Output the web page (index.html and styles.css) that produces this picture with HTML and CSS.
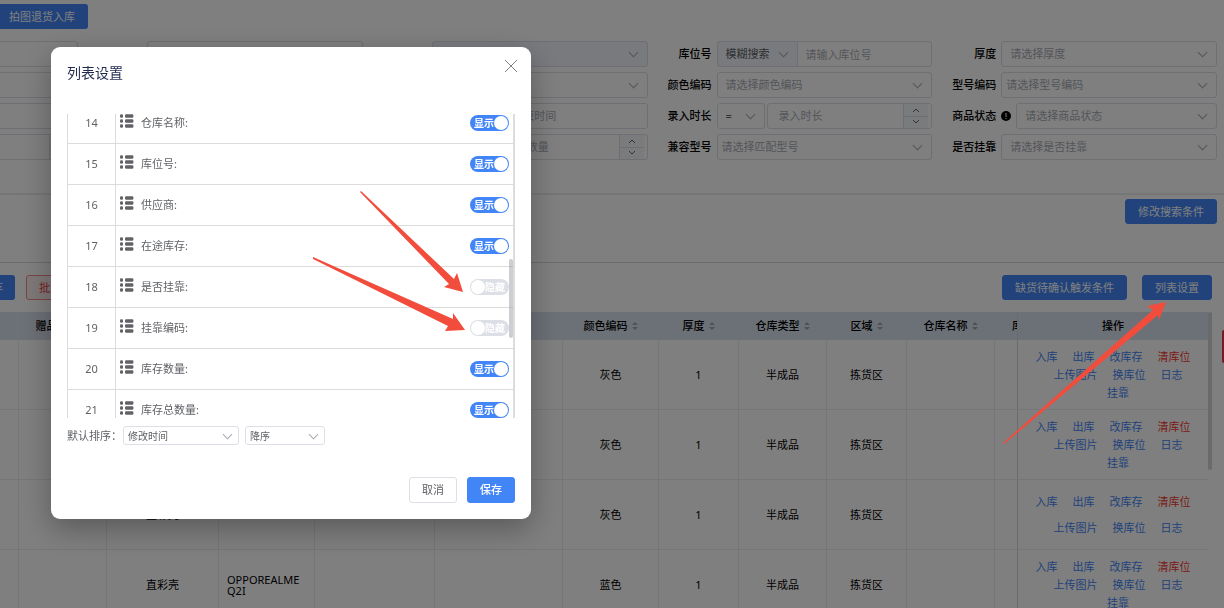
FILE: index.html
```html
<!DOCTYPE html>
<html lang="zh-CN">
<head>
    <meta charset="UTF-8">
    <title>库存列表</title>
    <link rel="stylesheet" href="styles.css">
</head>
<body>
<svg class="defs" aria-hidden="true">
    <symbol id="icon-list" viewBox="0 0 14 18">
        <rect x="0" y=".3" width="3" height="3.4" rx="1.2"/><rect x="5" y=".3" width="8.4" height="3.4" rx="1.2"/>
        <rect x="0" y="5.3" width="3" height="3.4" rx="1.2"/><rect x="5" y="5.3" width="8.4" height="3.4" rx="1.2"/>
        <rect x="0" y="10.3" width="3" height="3.4" rx="1.2"/><rect x="5" y="10.3" width="8.4" height="3.4" rx="1.2"/>
    </symbol>
    <symbol id="icon-sort" viewBox="0 0 6 10">
        <path d="M0 4L3 1L6 4zM0 6L3 9L6 6z"/>
    </symbol>
    <symbol id="icon-up" viewBox="0 0 8 6">
        <path d="M1 5L4 2L7 5" fill="none" stroke="currentColor"/>
    </symbol>
    <symbol id="icon-down" viewBox="0 0 8 6">
        <path d="M1 1L4 4L7 1" fill="none" stroke="currentColor"/>
    </symbol>
</svg>
<div class="page">
    <!-- 搜索条件 -->
    <div class="search">
        <button class="btn primary cut">拍图退货入库</button>
        <div class="filters">
            <div class="item"><input class="box cut" type="text" aria-label="编码"></div>
            <div class="item"><label for="f12"></label><input class="box" id="f12" type="text"></div>
            <div class="item">
                <label for="f13"></label>
                <div class="select gray"><select id="f13"><option></option></select></div>
            </div>
            <div class="item">
                <label for="f14">库位号</label>
                <div class="select gray mode"><select aria-label="搜索方式"><option>模糊搜索</option></select></div>
                <input class="box joined" id="f14" type="text" placeholder="请输入库位号">
            </div>
            <div class="item">
                <label for="f15">厚度</label>
                <div class="select"><select id="f15"><option>请选择厚度</option></select></div>
            </div>

            <div class="item"><input class="box cut" type="text" aria-label="名称"></div>
            <div class="item"><label for="f22"></label><input class="box" id="f22" type="text"></div>
            <div class="item">
                <label for="f23"></label>
                <div class="select"><select id="f23"><option></option></select></div>
            </div>
            <div class="item">
                <label for="f24">颜色编码</label>
                <div class="select"><select id="f24"><option>请选择颜色编码</option></select></div>
            </div>
            <div class="item">
                <label for="f25">型号编码</label>
                <div class="select tight"><select id="f25"><option>请选择型号编码</option></select></div>
            </div>

            <div class="item"><input class="box cut" type="text" aria-label="型号"></div>
            <div class="item"><label for="f32"></label><input class="box" id="f32" type="text"></div>
            <div class="item">
                <label for="f33"></label>
                <div class="box range">
                    <input id="f33" type="text">
                    <input type="text" placeholder="结束时间" aria-label="结束时间">
                </div>
            </div>
            <div class="item">
                <label for="f34">录入时长</label>
                <div class="select op"><select aria-label="比较"><option>=</option></select></div>
                <div class="box number">
                    <input id="f34" type="text" placeholder="录入时长">
                    <div class="steps">
                        <button aria-label="增加"><svg><use href="#icon-up"/></svg></button>
                        <button aria-label="减少"><svg><use href="#icon-down"/></svg></button>
                    </div>
                </div>
            </div>
            <div class="item">
                <label for="f35">商品状态</label>
                <svg class="tip" viewBox="0 0 10 10"><circle cx="5" cy="5" r="5"/><path d="M5 2v4M5 7v1" stroke="#fff"/></svg>
                <div class="select"><select id="f35"><option>请选择商品状态</option></select></div>
            </div>

            <div class="item">
                <div class="box number cut">
                    <input type="text" aria-label="库存">
                    <div class="steps">
                        <button aria-label="增加"><svg><use href="#icon-up"/></svg></button>
                        <button aria-label="减少"><svg><use href="#icon-down"/></svg></button>
                    </div>
                </div>
            </div>
            <div class="item"><label for="f42"></label><input class="box" id="f42" type="text"></div>
            <div class="item">
                <label for="f43"></label>
                <div class="select op"><select aria-label="比较"><option>=</option></select></div>
                <div class="box number">
                    <input id="f43" type="text" placeholder="请输入数量">
                    <div class="steps">
                        <button aria-label="增加"><svg><use href="#icon-up"/></svg></button>
                        <button aria-label="减少"><svg><use href="#icon-down"/></svg></button>
                    </div>
                </div>
            </div>
            <div class="item">
                <label for="f44">兼容型号</label>
                <div class="select tight"><select id="f44"><option>请选择匹配型号</option></select></div>
            </div>
            <div class="item">
                <label for="f45">是否挂靠</label>
                <div class="select"><select id="f45"><option>请选择是否挂靠</option></select></div>
            </div>
        </div>
    </div>
    <div class="search-actions">
        <button class="btn primary">修改搜索条件</button>
    </div>

    <!-- 工具栏 -->
    <div class="toolbar">
        <button class="btn primary rest">存</button>
        <button class="btn danger">批量删除</button>
        <span class="space"></span>
        <button class="btn primary">缺货待确认触发条件</button>
        <button class="btn primary">列表设置</button>
    </div>

    <!-- 库存表格 -->
    <div class="table-wrap">
        <div class="table-body">
            <table class="stock">
                <colgroup>
                    <col class="w18"><col class="w88"><col class="w112"><col class="w96"><col class="w120"><col class="w128">
                    <col class="w96"><col class="w80"><col class="w88"><col class="w80"><col class="w88"><col class="w23"><col class="w191">
                </colgroup>
                <thead>
                <tr>
                    <th></th>
                    <th>赠品数量<svg class="sort"><use href="#icon-sort"/></svg></th>
                    <th></th>
                    <th></th>
                    <th></th>
                    <th></th>
                    <th>颜色编码<svg class="sort"><use href="#icon-sort"/></svg></th>
                    <th>厚度<svg class="sort"><use href="#icon-sort"/></svg></th>
                    <th>仓库类型<svg class="sort"><use href="#icon-sort"/></svg></th>
                    <th>区域<svg class="sort"><use href="#icon-sort"/></svg></th>
                    <th>仓库名称<svg class="sort"><use href="#icon-sort"/></svg></th>
                    <th class="under">库</th>
                    <th class="fixed">操作</th>
                </tr>
                </thead>
                <tbody>
                <tr>
                    <td></td><td></td><td></td><td></td><td></td><td></td>
                    <td>灰色</td><td>1</td><td>半成品</td><td>拣货区</td><td></td><td></td>
                    <td class="fixed">
                        <div class="links"><a href="#">入库</a><a href="#">出库</a><a href="#">改库存</a><a href="#" class="red">清库位</a></div>
                        <div class="links more"><a href="#">上传图片</a><a href="#">换库位</a><a href="#">日志</a></div>
                        <div class="links more"><a href="#">挂靠</a></div>
                    </td>
                </tr>
                <tr>
                    <td></td><td></td><td></td><td></td><td></td><td></td>
                    <td>灰色</td><td>1</td><td>半成品</td><td>拣货区</td><td></td><td></td>
                    <td class="fixed">
                        <div class="links"><a href="#">入库</a><a href="#">出库</a><a href="#">改库存</a><a href="#" class="red">清库位</a></div>
                        <div class="links more"><a href="#">上传图片</a><a href="#">换库位</a><a href="#">日志</a></div>
                        <div class="links more"><a href="#">挂靠</a></div>
                    </td>
                </tr>
                <tr>
                    <td></td><td></td><td>直彩壳</td><td></td><td></td><td></td>
                    <td>灰色</td><td>1</td><td>半成品</td><td>拣货区</td><td></td><td></td>
                    <td class="fixed loose">
                        <div class="links"><a href="#">入库</a><a href="#">出库</a><a href="#">改库存</a><a href="#" class="red">清库位</a></div>
                        <div class="links more"><a href="#">上传图片</a><a href="#">换库位</a><a href="#">日志</a></div>
                    </td>
                </tr>
                <tr>
                    <td></td><td></td><td>直彩壳</td><td class="model">OPPOREALME Q2I</td><td></td><td></td>
                    <td>蓝色</td><td>1</td><td>半成品</td><td>拣货区</td><td></td><td></td>
                    <td class="fixed">
                        <div class="links"><a href="#">入库</a><a href="#">出库</a><a href="#">改库存</a><a href="#" class="red">清库位</a></div>
                        <div class="links more"><a href="#">上传图片</a><a href="#">换库位</a><a href="#">日志</a></div>
                        <div class="links more"><a href="#">挂靠</a></div>
                    </td>
                </tr>
                </tbody>
            </table>
        </div>
        <div class="bar"></div>
    </div>
</div>
<div class="side-tab"></div>
<div class="mask"></div>

<!-- 列表设置弹窗 -->
<div class="dialog" role="dialog" aria-labelledby="title">
    <div class="dialog-head">
        <h2 id="title">列表设置</h2>
        <button class="close" aria-label="关闭">
            <svg viewBox="0 0 12 12"><path d="M0 0L12 12M12 0L0 12"/></svg>
        </button>
    </div>
    <div class="list">
        <ul>
            <li><span class="num">14</span><svg class="drag"><use href="#icon-list"/></svg><span class="name">仓库名称:</span>
                <label class="switch"><input type="checkbox" aria-label="仓库名称" checked><span>显示</span></label></li>
            <li><span class="num">15</span><svg class="drag"><use href="#icon-list"/></svg><span class="name">库位号:</span>
                <label class="switch"><input type="checkbox" aria-label="库位号" checked><span>显示</span></label></li>
            <li><span class="num">16</span><svg class="drag"><use href="#icon-list"/></svg><span class="name">供应商:</span>
                <label class="switch"><input type="checkbox" aria-label="供应商" checked><span>显示</span></label></li>
            <li><span class="num">17</span><svg class="drag"><use href="#icon-list"/></svg><span class="name">在途库存:</span>
                <label class="switch"><input type="checkbox" aria-label="在途库存" checked><span>显示</span></label></li>
            <li><span class="num">18</span><svg class="drag"><use href="#icon-list"/></svg><span class="name">是否挂靠:</span>
                <label class="switch"><input type="checkbox" aria-label="是否挂靠"><span>隐藏</span></label></li>
            <li><span class="num">19</span><svg class="drag"><use href="#icon-list"/></svg><span class="name">挂靠编码:</span>
                <label class="switch"><input type="checkbox" aria-label="挂靠编码"><span>隐藏</span></label></li>
            <li><span class="num">20</span><svg class="drag"><use href="#icon-list"/></svg><span class="name">库存数量:</span>
                <label class="switch"><input type="checkbox" aria-label="库存数量" checked><span>显示</span></label></li>
            <li><span class="num">21</span><svg class="drag"><use href="#icon-list"/></svg><span class="name">库存总数量:</span>
                <label class="switch"><input type="checkbox" aria-label="库存总数量" checked><span>显示</span></label></li>
        </ul>
        <div class="thumb"></div>
    </div>
    <div class="order">
        <label for="by">默认排序：</label>
        <div class="select small by"><select id="by"><option>修改时间</option></select></div>
        <div class="select small dir"><select aria-label="排序方向"><option>降序</option></select></div>
    </div>
    <div class="dialog-foot">
        <button class="btn">取消</button>
        <button class="btn primary">保存</button>
    </div>
</div>

<!-- 标注箭头 -->
<svg class="arrows" width="1224" height="608" aria-hidden="true">
    <path d="M361 191L454 279L457 273L463 292L444 287L449 284L360 192z"/>
    <path d="M313 257L453 319L453 313L465 330L445 331L448 326L313 259z"/>
    <path d="M1003 443L1153 310L1147 306L1166 302L1159 320L1158 315L1004 444z"/>
</svg>
</body>
</html>
```
FILE: styles.css
```css
*{
    box-sizing: border-box;
    margin: 0;
    padding: 0;
    list-style: none;
}
html,body{
    height: 100%;
    overflow: hidden;
}
body,button,input,select{
    font-family: "Noto Sans", "Noto Sans CJK SC", sans-serif;
    font-size: 11px;
    line-height: 16px;
}
body{
    color: #000;
    background-color: #fff;
}
a{
    text-decoration: none;
}
.defs{
    display: none;
}
.page{
    height: 100%;
    overflow: hidden;
}
/*按钮*/
.btn{
    height: 25px;
    padding: 0 12px;
    border: 1px solid #dcdfe6;
    border-radius: 3px;
    background-color: #fff;
    color: #606266;
    white-space: nowrap;
}
.btn.primary{
    border-color: #4285f6;
    background-color: #4285f6;
    color: #fff;
}
.btn.danger{
    border-color: #f28b8b;
    background-color: #fef0f0;
    color: #f04040;
}
.cut{
    border-left: none !important;
    border-top-left-radius: 0 !important;
    border-bottom-left-radius: 0 !important;
}
/*搜索区*/
.search{
    padding: 4px 7px 33px 0;
    border-bottom: 2px solid #ececee;
}
.search > .btn{
    display: block;
    padding-left: 9px;
}
.filters{
    display: grid;
    grid-template-columns: 78px repeat(4, 1fr);
    gap: 5px 0;
    margin-top: 12px;
}
.item{
    display: flex;
    align-items: center;
    height: 26px;
    min-width: 0;
}
.item label{
    flex: none;
    width: 69px;
    padding-right: 5px;
    text-align: right;
    font-weight: 500;
}
.tip{
    flex: none;
    width: 10px;
    height: 10px;
    margin-right: 5px;
}
.box,.select{
    flex: 1;
    min-width: 0;
    height: 26px;
    border: 1px solid #dcdfe6;
    border-radius: 3px;
    background-color: #fff;
}
input{
    min-width: 0;
    padding: 0 8px;
    border: none;
    outline: none;
    background: none;
    color: #606266;
}
input::placeholder{
    color: #a8abb2;
}
.select{
    position: relative;
}
.select select{
    display: block;
    width: 100%;
    height: 100%;
    padding-left: 8px;
    appearance: none;
    border: none;
    outline: none;
    background: none;
    color: #a8abb2;
}
.select::after{
    content: "";
    position: absolute;
    right: 10px;
    top: 7px;
    width: 6px;
    height: 6px;
    border-right: 1px solid #a8abb2;
    border-bottom: 1px solid #a8abb2;
    transform: rotate(45deg);
    pointer-events: none;
}
.select.tight select{
    padding-left: 4px;
}
.select.gray{
    background-color: #f2f5fc;
}
.select.mode{
    flex: none;
    width: 80px;
    border-right: none;
    border-radius: 3px 0 0 3px;
}
.select.mode select,.select.op select{
    color: #606266;
}
.select.op{
    flex: none;
    width: 48px;
    margin-right: 2px;
}
.box.joined{
    border-radius: 0 3px 3px 0;
}
.range{
    display: flex;
}
.range input{
    width: 25%;
    padding: 0;
    text-align: center;
}
.range input:first-child{
    width: 35%;
}
.number{
    display: flex;
    padding-right: 3px;
}
.number input{
    flex: 1;
    padding-left: 11px;
}
.steps{
    display: flex;
    flex-direction: column;
    width: 25px;
    border-left: 1px solid #dcdfe6;
    background-color: #f5f7fa;
}
.steps button{
    display: flex;
    flex: 1;
    align-items: center;
    justify-content: center;
    border: none;
    background: none;
    color: #606266;
}
.steps button:first-child{
    border-bottom: 1px solid #dcdfe6;
}
.steps svg{
    width: 8px;
    height: 6px;
}
.search-actions{
    display: flex;
    justify-content: flex-end;
    padding: 4px 7px 38px 0;
    border-bottom: 1px solid #d8d8da;
}
/*工具栏*/
.toolbar{
    display: flex;
    padding: 12px 12px 12px 0;
}
.toolbar .rest{
    display: flex;
    align-items: center;
    justify-content: flex-end;
    width: 15px;
    margin-right: 11px;
    padding: 0 11px 0 0;
    border-left: none;
    border-radius: 0 3px 3px 0;
    overflow: hidden;
}
.toolbar .space{
    flex: 1;
}
.toolbar .btn:last-child{
    margin-left: 15px;
}
/*表格*/
.table-wrap{
    display: flex;
    padding-right: 12px;
}
.table-body{
    flex: 1;
    min-width: 0;
}
.stock{
    width: 100%;
    table-layout: fixed;
    border-collapse: separate;
    border-spacing: 0;
}
.w18{ width: 18px; }
.w23{ width: 23px; }
.w80{ width: 80px; }
.w88{ width: 88px; }
.w96{ width: 96px; }
.w112{ width: 112px; }
.w120{ width: 120px; }
.w128{ width: 128px; }
.w191{ width: 191px; }
.stock th{
    height: 28px;
    border-left: 1px solid #dfe3ec;
    background-color: #d9e0ee;
    font-weight: 500;
    white-space: nowrap;
    overflow: hidden;
}
.stock td{
    height: 70px;
    border-left: 1px solid #ebedf3;
    border-bottom: 1px solid #ebedf3;
    text-align: center;
}
.stock th:first-child,.stock td:first-child{
    border-left: none;
}
.stock .fixed{
    border-left: 1px solid #d4d7de;
}
.stock .under{
    padding-left: 17px;
    text-align: left;
}
.stock .model{
    padding: 0 8px;
    line-height: 11px;
    text-align: left;
}
.sort{
    width: 6px;
    height: 10px;
    margin-left: 4px;
    vertical-align: -1px;
    fill: #a0a3ab;
}
.links{
    display: flex;
    justify-content: center;
    gap: 15px;
    line-height: 18px;
}
.links.more{
    padding-left: 10px;
}
.loose .links{
    line-height: 26px;
}
.links a{
    color: #4285f6;
}
.links a.red{
    color: #f5382c;
}
.bar{
    width: 4px;
    height: 158px;
    border-radius: 2px;
    background-color: #d3d4d9;
}
.side-tab{
    position: fixed;
    right: 0;
    top: 330px;
    width: 2px;
    height: 33px;
    border-radius: 2px 0 0 2px;
    background-color: #e8394a;
}
.mask{
    position: fixed;
    inset: 0;
    background-color: rgba(0, 0, 0, .5);
}
/*弹窗*/
.dialog{
    position: fixed;
    left: 51px;
    top: 47px;
    width: 480px;
    padding: 16px;
    border-radius: 9px;
    background-color: #fff;
    box-shadow: 0 10px 30px rgba(0, 0, 0, .3);
    color: #606266;
}
.dialog-head{
    display: flex;
    justify-content: space-between;
    height: 51px;
}
.dialog-head h2{
    color: #1f2a4d;
    font-size: 14px;
    font-weight: 400;
    line-height: 20px;
}
.close{
    width: 12px;
    height: 12px;
    margin: -3px -2px 0 0;
    border: none;
    background: none;
}
.close svg{
    display: block;
    width: 12px;
    height: 12px;
    overflow: visible;
    stroke: #7d8085;
}
.list{
    position: relative;
    display: flex;
    align-items: center;
    height: 304px;
    overflow: hidden;
    border-left: 1px solid #dcdcdc;
    border-right: 2px solid #dcdcdc;
}
.list ul{
    flex: 1;
}
.list li{
    display: flex;
    align-items: center;
    height: 41px;
    padding-right: 4px;
    border-top: 1px solid #dcdcdc;
}
.num{
    display: flex;
    align-items: center;
    justify-content: center;
    width: 48px;
    height: 100%;
    border-right: 1px solid #dcdcdc;
}
.drag{
    width: 14px;
    height: 18px;
    margin: 0 7px 0 4px;
    fill: #606266;
}
.name{
    flex: 1;
}
.switch{
    display: grid;
    align-items: center;
    width: 39px;
    height: 16px;
    border-radius: 8px;
    background-color: #dcdfe6;
    color: #fff;
}
.switch input,.switch span{
    grid-area: 1 / 1;
}
.switch input{
    z-index: 1;
    width: 14px;
    height: 14px;
    margin: 0 1px;
    padding: 0;
    appearance: none;
    border-radius: 7px;
    background-color: #fff;
}
.switch span{
    padding: 0 4px;
    text-align: right;
    font-size: 10px;
    font-weight: 700;
    line-height: 16px;
}
.switch:has(:checked){
    background-color: #4285f6;
}
.switch input:checked{
    justify-self: end;
}
.switch input:checked + span{
    text-align: left;
}
.thumb{
    position: absolute;
    right: 0;
    top: 145px;
    width: 4px;
    height: 79px;
    border-radius: 2px;
    background-color: rgba(144, 147, 153, .45);
}
.order{
    display: flex;
    align-items: center;
    margin-top: 8px;
}
.select.small{
    flex: none;
    height: 19px;
}
.select.small select{
    padding-left: 4px;
    color: #606266;
    font-size: 10px;
}
.select.small::after{
    top: 4px;
    right: 7px;
}
.select.by{
    width: 116px;
    margin: 0 6px 0 1px;
}
.select.dir{
    width: 80px;
}
.dialog-foot{
    display: flex;
    justify-content: flex-end;
    gap: 10px;
    margin-top: 32px;
}
.dialog-foot .btn{
    width: 48px;
    height: 26px;
}
.dialog-foot .primary{
    font-weight: 500;
}
.arrows{
    position: fixed;
    left: 0;
    top: 0;
    pointer-events: none;
    fill: #f24c3d;
}
```
